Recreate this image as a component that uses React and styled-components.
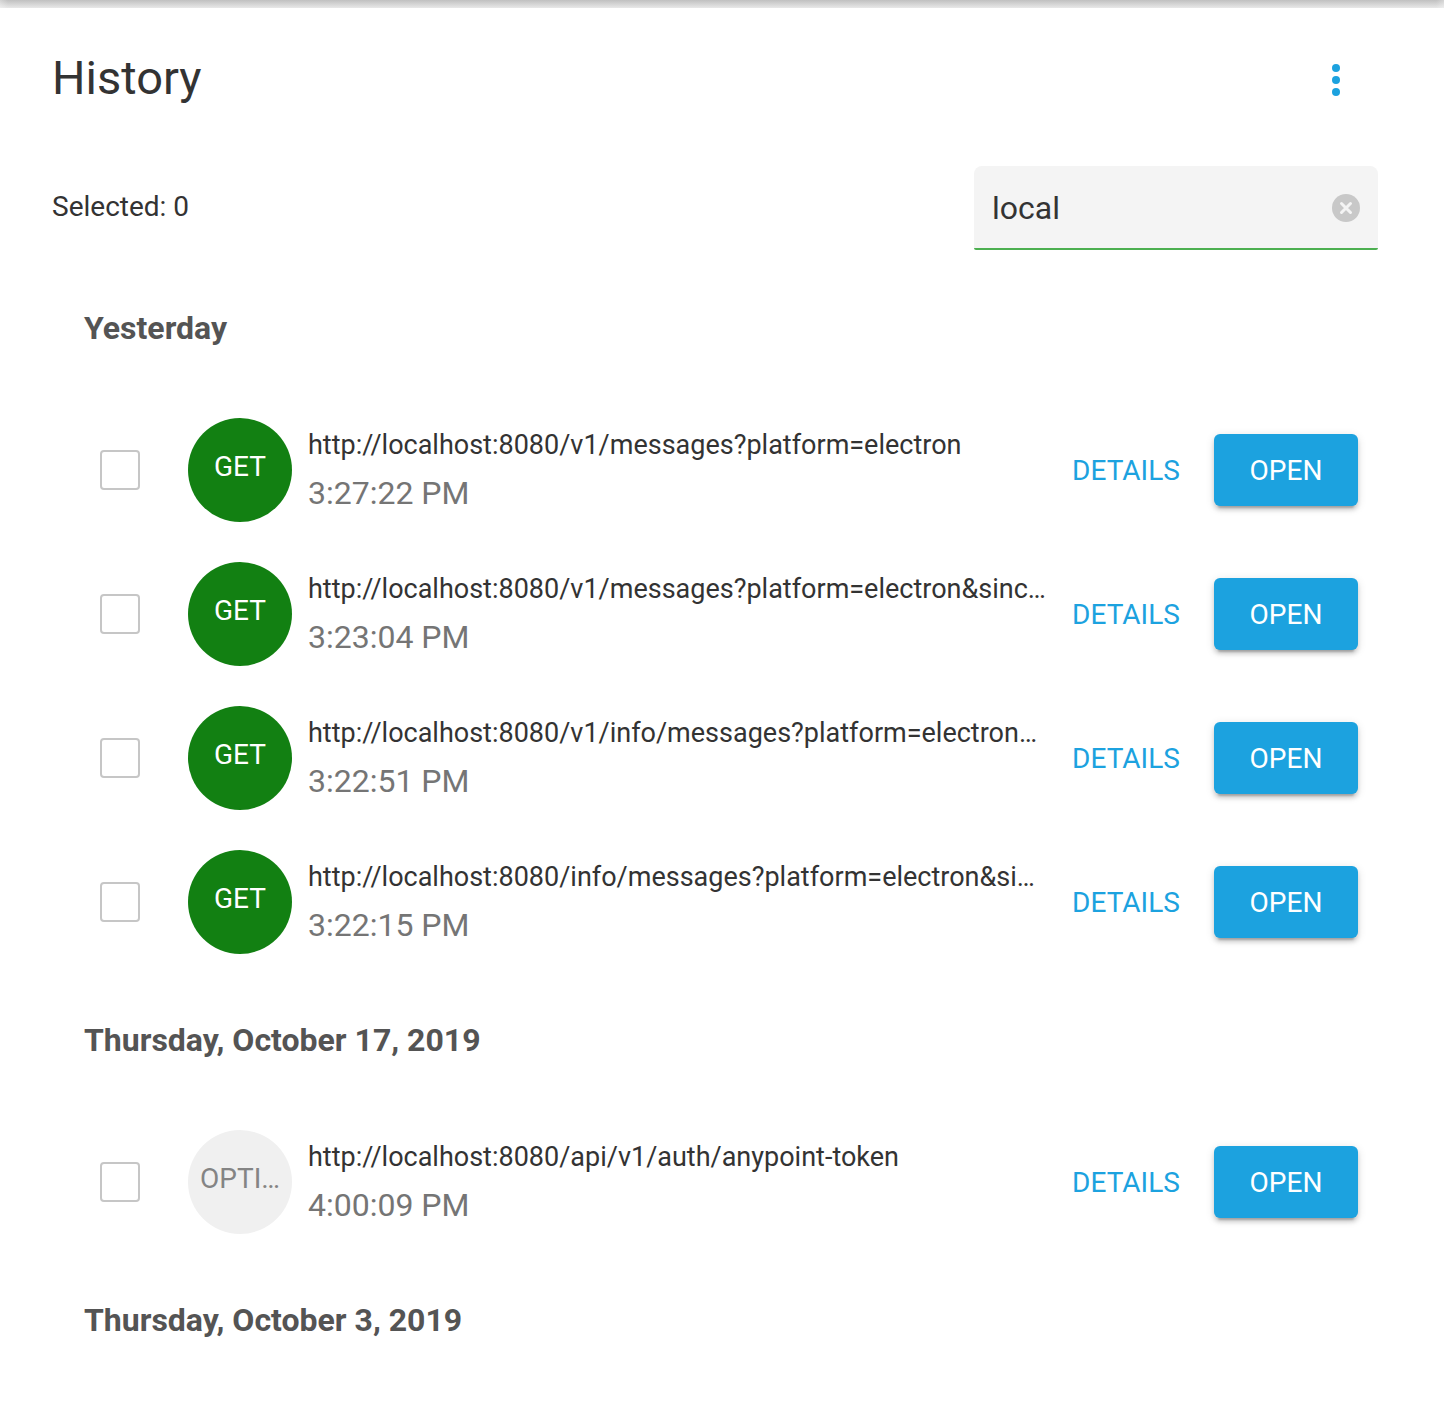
import React, { useState } from "react";
import styled, { createGlobalStyle } from "styled-components";

const GlobalStyle = createGlobalStyle`
  *, *::before, *::after { box-sizing: border-box; }
  body {
    margin: 0;
    background: #fff;
    color: #333;
    font-family: Roboto, "Liberation Sans", sans-serif;
  }
  button, input { font-family: inherit; }
`;

const TopShade = styled.div`
  height: 8px;
  background:
    linear-gradient(
      to right,
      rgba(255, 255, 255, 0.3),
      transparent 8px,
      transparent calc(100% - 8px),
      rgba(255, 255, 255, 0.3)
    ),
    linear-gradient(to bottom, #c0c0c0, #e8e8e8);
`;

const Page = styled.main`
  padding: 32px 66px 0 52px;
`;

const Header = styled.header`
  display: flex;
  align-items: center;
  justify-content: space-between;
  height: 80px;
  padding-right: 2px;
`;

const Title = styled.h1`
  margin: 0;
  padding-bottom: 4px;
  font-size: 47px;
  line-height: 56px;
  font-weight: 400;
`;

const MenuButton = styled.button`
  display: grid;
  place-items: center;
  width: 80px;
  height: 80px;
  padding: 0;
  border: 0;
  border-radius: 50%;
  background: none;
  color: #1ca2df;
  cursor: pointer;
`;

const Toolbar = styled.div`
  display: flex;
  align-items: center;
  justify-content: space-between;
  margin-top: 46px;
`;

const SelectedCount = styled.p`
  margin: 0;
  padding-bottom: 2px;
  font-size: 28px;
  line-height: 40px;
`;

const SearchField = styled.label`
  display: flex;
  align-items: center;
  width: 404px;
  height: 84px;
  padding: 2px 18px 0;
  border-bottom: 2px solid #4caf50;
  border-radius: 8px 8px 2px 2px;
  background: #f4f4f4;
`;

const SearchInput = styled.input`
  flex: 1;
  min-width: 0;
  height: 48px;
  padding: 0;
  border: 0;
  outline: 0;
  background: none;
  color: #333;
  font-size: 32px;
`;

const ClearButton = styled.button`
  display: flex;
  padding: 0;
  border: 0;
  background: none;
  cursor: pointer;
`;

const HistoryList = styled.div`
  padding: 12px 12px 0 32px;
`;

const DayTitle = styled.h2`
  margin: 0;
  padding: 42px 0 46px;
  color: #545454;
  font-size: 32px;
  line-height: 48px;
  font-weight: 700;
`;

const Entries = styled.ul`
  margin: 0;
  padding: 0;
  list-style: none;
`;

const Entry = styled.li`
  display: flex;
  align-items: center;
  height: 144px;
  padding: 0 8px 0 16px;
`;

const Check = styled.input`
  appearance: none;
  flex: none;
  width: 40px;
  height: 40px;
  margin: 0 48px 0 0;
  border: 2px solid #c6c6c6;
  border-radius: 4px;
  background: #fff;
  cursor: pointer;

  &:checked {
    border-color: #1ca2df;
    background: #1ca2df;
  }
`;

const Method = styled.span`
  display: flex;
  align-items: center;
  justify-content: center;
  flex: none;
  width: 104px;
  height: 104px;
  margin-right: 16px;
  padding: 0 12px 6px;
  border-radius: 50%;
  background: ${(p) => (p.$get ? "#128012" : "#f0f0f0")};
  color: ${(p) => (p.$get ? "#fff" : "#848484")};
  font-size: 28px;
  line-height: 32px;
`;

const Ellipsis = styled.span`
  overflow: hidden;
  text-overflow: ellipsis;
  white-space: nowrap;
`;

const Request = styled.div`
  display: flex;
  flex-direction: column;
  flex: 1;
  min-width: 0;
  padding-bottom: 2px;
`;

const Url = styled(Ellipsis)`
  font-size: 27px;
  line-height: 48px;
`;

const Time = styled.time`
  color: #757575;
  font-size: 32px;
  line-height: 48px;
`;

const Action = styled.button`
  flex: none;
  min-width: 144px;
  height: 72px;
  margin: 0 0 0 ${(p) => (p.$raised ? "16px" : "8px")};
  padding: 0 16px;
  border: 0;
  border-radius: 6px;
  background: ${(p) => (p.$raised ? "#1ca2df" : "transparent")};
  color: ${(p) => (p.$raised ? "#fff" : "#1ca2df")};
  box-shadow: ${(p) =>
    p.$raised
      ? "0 4px 4px rgba(0,0,0,.14), 0 2px 10px rgba(0,0,0,.12), 0 6px 2px -4px rgba(0,0,0,.2)"
      : "none"};
  font-size: 28px;
  text-transform: uppercase;
  cursor: pointer;
`;

const base = "http://localhost:8080";

const days = [
  {
    title: "Yesterday",
    entries: [
      { method: "GET", url: "/v1/messages?platform=electron", time: "3:27:22 PM" },
      { method: "GET", url: "/v1/messages?platform=electron&since=0", time: "3:23:04 PM" },
      { method: "GET", url: "/v1/info/messages?platform=electron&since=0", time: "3:22:51 PM" },
      { method: "GET", url: "/info/messages?platform=electron&since=0", time: "3:22:15 PM" },
    ],
  },
  {
    title: "Thursday, October 17, 2019",
    entries: [{ method: "OPTIONS", url: "/api/v1/auth/anypoint-token", time: "4:00:09 PM" }],
  },
  { title: "Thursday, October 3, 2019", entries: [] },
];

function HistoryEntry({ entry, selected, onToggle }) {
  return (
    <Entry>
      <Check
        type="checkbox"
        aria-label={`Select request made at ${entry.time}`}
        checked={selected}
        onChange={onToggle}
      />
      <Method $get={entry.method === "GET"}>
        <Ellipsis>{entry.method}</Ellipsis>
      </Method>
      <Request>
        <Url>{base + entry.url}</Url>
        <Time>{entry.time}</Time>
      </Request>
      <Action type="button">Details</Action>
      <Action type="button" $raised>
        Open
      </Action>
    </Entry>
  );
}

export default function App() {
  const [query, setQuery] = useState("local");
  const [selected, setSelected] = useState([]);

  const toggle = (id) =>
    setSelected((ids) => (ids.includes(id) ? ids.filter((i) => i !== id) : [...ids, id]));

  return (
    <>
      <GlobalStyle />
      <TopShade />
      <Page>
        <Header>
          <Title>History</Title>
          <MenuButton type="button" aria-label="Menu">
            <svg width="48" height="48" viewBox="0 0 24 24" fill="currentColor" aria-hidden="true">
              <circle cx="12" cy="6" r="2" />
              <circle cx="12" cy="12" r="2" />
              <circle cx="12" cy="18" r="2" />
            </svg>
          </MenuButton>
        </Header>
        <Toolbar>
          <SelectedCount>Selected: {selected.length}</SelectedCount>
          <SearchField>
            <SearchInput
              type="text"
              aria-label="Search history"
              value={query}
              onChange={(e) => setQuery(e.target.value)}
            />
            <ClearButton type="button" aria-label="Clear search" onClick={() => setQuery("")}>
              <svg width="28" height="28" viewBox="0 0 28 28" aria-hidden="true">
                <circle cx="14" cy="14" r="14" fill="#c8c8c8" />
                <path d="M9.5 9.5l9 9M18.5 9.5l-9 9" stroke="#f4f4f4" strokeWidth="3" strokeLinecap="round" />
              </svg>
            </ClearButton>
          </SearchField>
        </Toolbar>
        <HistoryList>
          {days.map((day) => (
            <section key={day.title}>
              <DayTitle>{day.title}</DayTitle>
              <Entries>
                {day.entries.map((entry) => (
                  <HistoryEntry
                    key={entry.time}
                    entry={entry}
                    selected={selected.includes(entry.time)}
                    onToggle={() => toggle(entry.time)}
                  />
                ))}
              </Entries>
            </section>
          ))}
        </HistoryList>
      </Page>
    </>
  );
}
